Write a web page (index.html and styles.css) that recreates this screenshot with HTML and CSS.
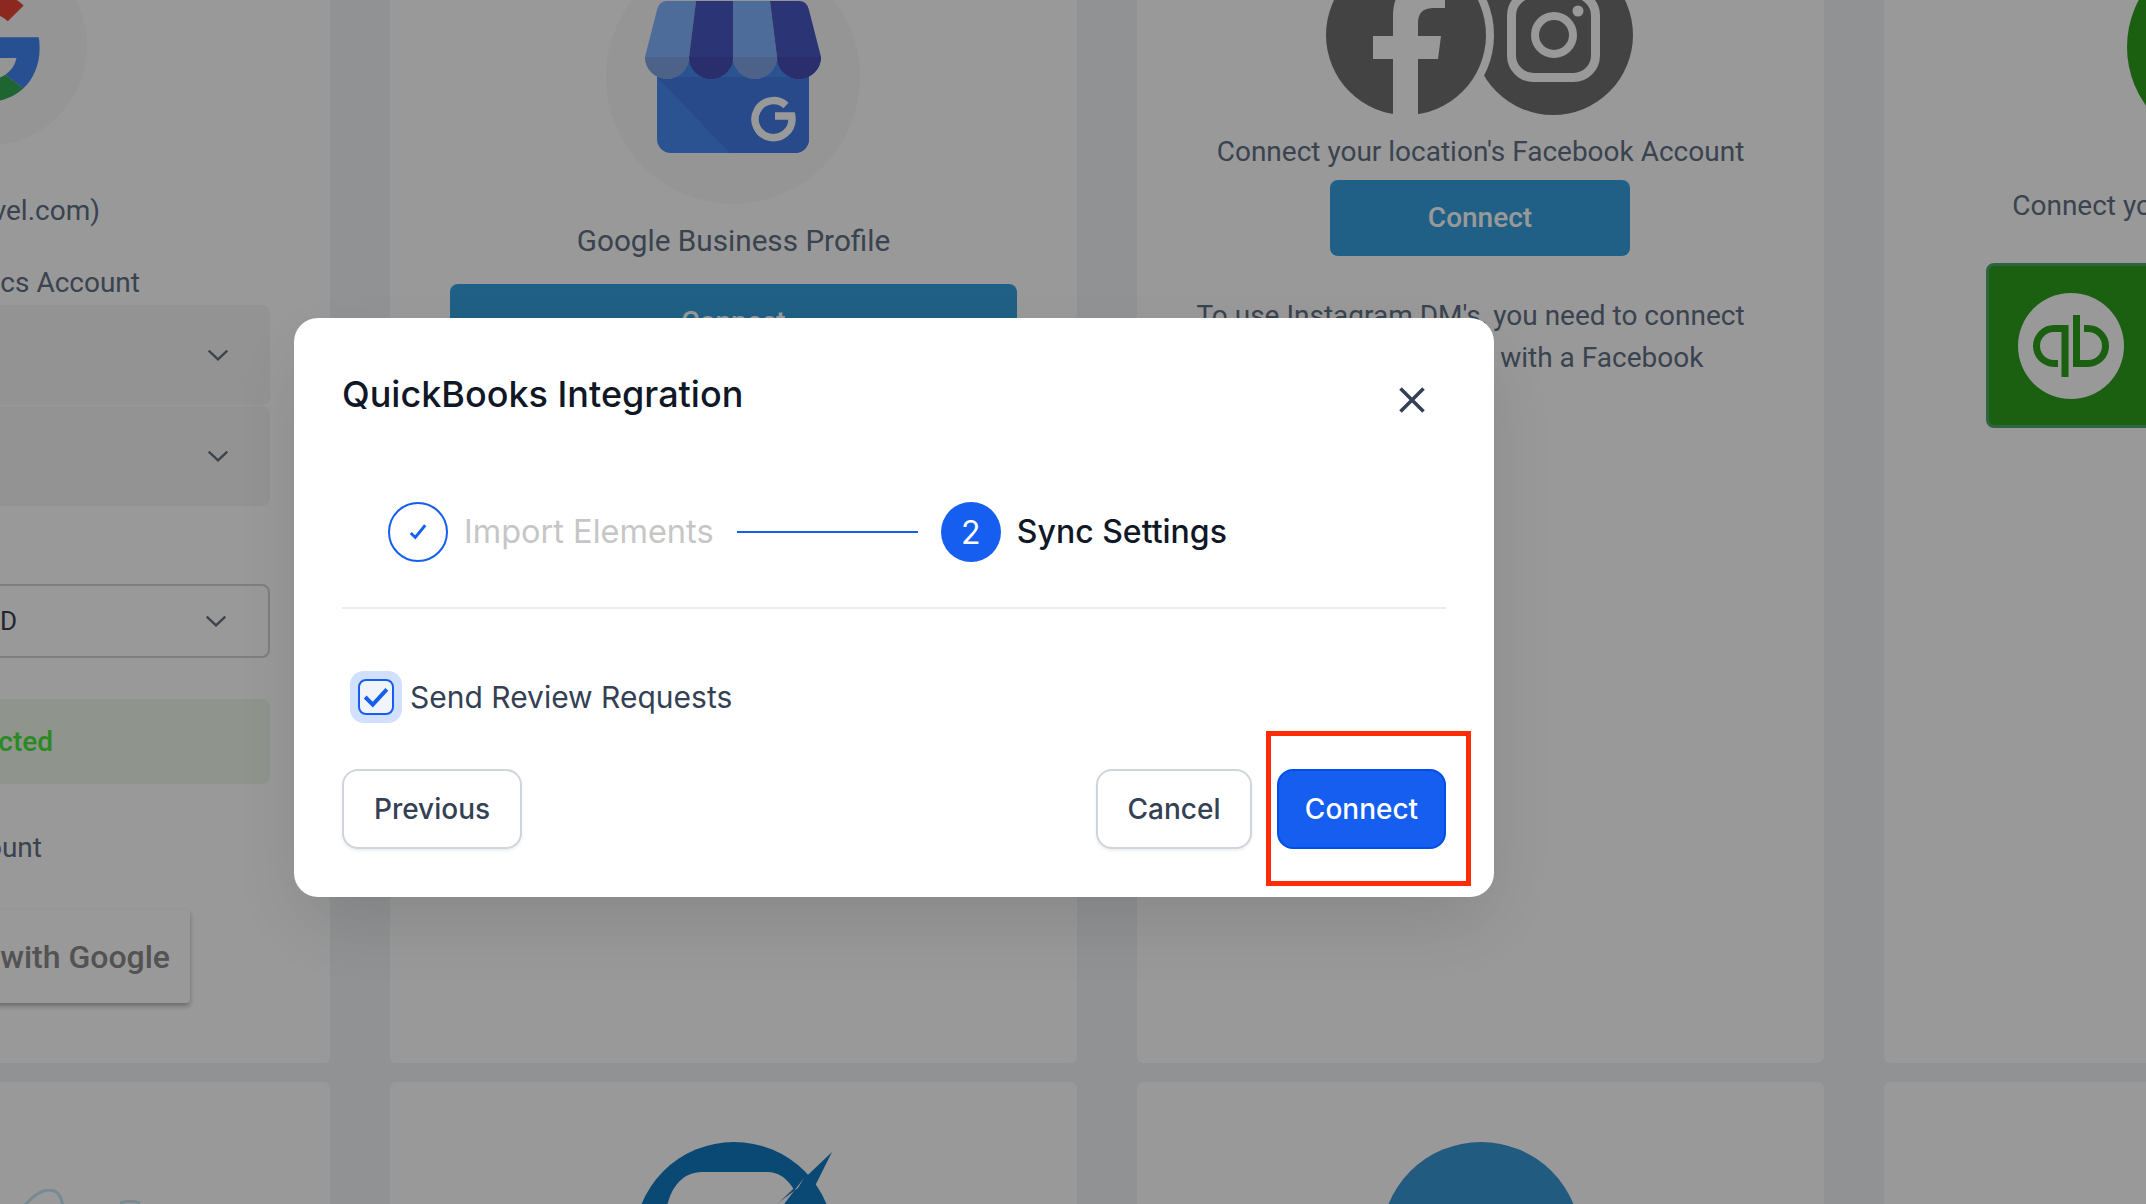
FILE: index.html
```html
<!DOCTYPE html>
<html lang="en">
<head>
<meta charset="utf-8">
<title>QuickBooks Integration</title>
<link rel="stylesheet" href="styles.css">
</head>
<body>
<div class="page">
  <section class="card card-google">
    <div class="logo-circle small">
      <svg class="g-logo" viewBox="0 0 48 48" width="111" height="111">
        <path fill="#EA4335" d="M24 9.5c3.54 0 6.71 1.22 9.21 3.6l6.85-6.85C35.9 2.38 30.47 0 24 0 14.62 0 6.51 5.38 2.56 13.22l7.98 6.19C12.43 13.72 17.74 9.5 24 9.5z"/>
        <path fill="#4285F4" d="M46.98 24.55c0-1.57-.15-3.09-.38-4.55H24v9.02h12.94c-.58 2.96-2.26 5.48-4.78 7.18l7.73 6c4.51-4.18 7.09-10.36 7.09-17.65z"/>
        <path fill="#FBBC05" d="M10.53 28.59c-.48-1.45-.76-2.99-.76-4.59s.27-3.14.76-4.59l-7.98-6.19C.92 16.46 0 20.12 0 24c0 3.88.92 7.54 2.56 10.78l7.97-6.19z"/>
        <path fill="#34A853" d="M24 48c6.48 0 11.93-2.13 15.89-5.81l-7.73-6c-2.15 1.45-4.92 2.3-8.16 2.3-6.26 0-11.57-4.22-13.47-9.91l-7.98 6.19C6.51 42.62 14.62 48 24 48z"/>
      </svg>
    </div>
    <p class="tail tail-email">vel.com)</p>
    <p class="tail tail-account">cs Account</p>
    <div class="select filled first">
      <svg class="chev" viewBox="0 0 20 11"><path d="M1.5 1.5 10 9.5l8.5-8"/></svg>
    </div>
    <div class="select filled">
      <svg class="chev" viewBox="0 0 20 11"><path d="M1.5 1.5 10 9.5l8.5-8"/></svg>
    </div>
    <div class="select bordered">
      <span class="select-value">D</span>
      <svg class="chev" viewBox="0 0 20 11"><path d="M1.5 1.5 10 9.5l8.5-8"/></svg>
    </div>
    <div class="status">cted</div>
    <p class="tail tail-count">ount</p>
    <div class="google-btn">with Google</div>
  </section>

  <section class="card card-gbp">
    <div class="logo-circle large">
      <svg viewBox="0 0 176 152" width="176" height="152">
        <path fill="#4889f2" d="M12 60h152v78a14 14 0 0 1-14 14H26a14 14 0 0 1-14-14z"/>
        <path fill="#447be6" d="M12 76h152v62a14 14 0 0 1-14 14H85z"/>
        <path fill="#83b5ff" d="M22 0h29l-7 56a22 22 0 0 1-44 0L12 9Q14 0 22 0z"/>
        <path fill="#4858c3" d="M51 0h37v56a22 22 0 0 1-44 0z"/>
        <path fill="#83b5ff" d="M88 0h37l7 56a22 22 0 0 1-44 0z"/>
        <path fill="#4858c3" d="M125 0h29q8 0 10 9l12 47a22 22 0 0 1-44 0z"/>
        <path fill="#80a3e4" d="M0 56h44a22 22 0 0 1-44 0zM88 56h44a22 22 0 0 1-44 0z"/>
        <path fill="#464eb4" d="M44 56h44a22 22 0 0 1-44 0zM132 56h44a22 22 0 0 1-44 0z"/>
        <path fill="none" stroke="#fff" stroke-width="7.5" d="M141 104.500a18.500 18.500 0 1 0 6 13.500c0-1-.1-2-.3-3H130"/>
      </svg>
    </div>
    <p class="label label-gbp">Google Business Profile</p>
    <div class="btn-blue wide">Connect</div>
  </section>

  <section class="card card-social">
    <svg class="social" viewBox="0 0 307 160" width="307" height="160">
      <circle cx="227" cy="80" r="80" fill="#717171"/>
      <circle cx="80" cy="80" r="88" fill="#fff"/>
      <circle cx="80" cy="80" r="80" fill="#717171"/>
      <path fill="#fff" d="M67 160V104H47V81h20V61c0-24 13-36 35-36 6 0 12 .5 17 1.500V53h-11c-11 0-16 5-16 15v13h23l-3 23H92v56z"/>
      <rect x="185.500" y="38.500" width="84" height="84" rx="22" fill="none" stroke="#fff" stroke-width="9"/>
      <circle cx="228" cy="80" r="19" fill="none" stroke="#fff" stroke-width="8"/>
      <circle cx="252" cy="56" r="5.500" fill="#fff"/>
    </svg>
    <p class="label label-fb">Connect your location's Facebook Account</p>
    <div class="btn-blue narrow">Connect</div>
    <p class="label label-ig">To use Instagram DM's, you need to connect<br>your Instagram page with a Facebook</p>
  </section>

  <section class="card card-qb">
    <div class="qb-circle"></div>
    <p class="label label-qb">Connect your QuickBooks Account</p>
    <div class="qb-btn">
      <svg viewBox="-53 -53 106 106" width="106" height="106">
        <circle cx="0" cy="0" r="53" fill="#fff"/>
        <path fill="none" stroke="#2ca01c" stroke-width="7" d="M-6 31V-17.500H-17A17.500 17.500 0 0 0 -17 17.500H-13"/>
        <path fill="none" stroke="#2ca01c" stroke-width="7" d="M5.500 -31V17.500H17A17.500 17.500 0 0 0 17 -17.500H13"/>
      </svg>
    </div>
  </section>

  <section class="card row-two">
    <svg class="squiggle" viewBox="0 0 150 40" width="150" height="40">
      <path fill="none" stroke="#c5e6f7" stroke-width="3" d="M4 17C13 7 22 1 29 1c9 0 12 6 14 16M100 14c6-2 14-2 20 0"/>
    </svg>
  </section>
  <section class="card row-two">
    <svg class="ring" viewBox="0 0 210 70" width="210" height="70">
      <circle cx="100" cy="100" r="100" fill="#127ac1"/>
      <path fill="#fff" d="M32 70c3-22 15-40 36-40h66c17 0 30 18 34 40z"/>
      <path fill="#127ac1" d="M198 10 172 62l-7 8h-30z"/>
      <path fill="#fff" d="M170 36l-6 10-32 24h12z"/>
    </svg>
  </section>
  <section class="card row-two">
    <div class="blue-circle"></div>
  </section>
  <section class="card row-two"></section>
</div>

<div class="overlay">
  <div class="modal" role="dialog">
    <header class="modal-head">
      <h2 class="modal-title">QuickBooks Integration</h2>
      <svg class="close" viewBox="0 0 28 28" width="28" height="28"><path d="M2.500 2.500l23 23M25.500 2.500l-23 23"/></svg>
    </header>
    <div class="stepper">
      <span class="step-dot done">
        <svg viewBox="0 0 20 20" width="18" height="18"><path d="M2 11l5 5L18 2.500"/></svg>
      </span>
      <span class="step-label muted">Import Elements</span>
      <span class="step-line"></span>
      <span class="step-dot current">2</span>
      <span class="step-label active">Sync Settings</span>
    </div>
    <label class="check-row">
      <span class="check-halo">
        <span class="check-box">
          <svg viewBox="0 0 24 20" width="26" height="22"><path d="M2 10l7 7L22 3"/></svg>
        </span>
      </span>
      <span class="check-text">Send Review Requests</span>
    </label>
    <footer class="modal-foot">
      <button class="btn btn-white btn-prev">Previous</button>
      <span class="grow"></span>
      <button class="btn btn-white btn-cancel">Cancel</button>
      <button class="btn btn-primary">Connect</button>
    </footer>
    <div class="highlight"></div>
  </div>
</div>
</body>
</html>
```

FILE: styles.css
```css
* { box-sizing: border-box; }
html, body { margin: 0; height: 1204px; overflow: hidden; }
p { margin: 0; white-space: nowrap; }
body { position: relative; background: #f0f3f6; font-family: "Inter", "Liberation Sans", sans-serif; }

.page {
  display: grid;
  grid-template-columns: repeat(4, 687px);
  grid-template-rows: 1177px 300px;
  column-gap: 60px;
  row-gap: 19px;
  margin: -114px 0 0 -357px;
  width: 2961px;
}
.card {
  background: #fff;
  border-radius: 6px;
  padding: 60px;
  display: flex;
  flex-direction: column;
  align-items: center;
  font-family: "Roboto", "Liberation Sans", sans-serif;
  font-size: 28px;
  line-height: 42px;
  color: #617084;
  overflow: hidden;
}

.logo-circle { border-radius: 50%; background: #f8f8f8; display: flex; align-items: center; justify-content: center; flex: none; }
.logo-circle.small { width: 200px; height: 200px; }
.logo-circle.large { width: 254px; height: 254px; margin-right: 2px; }
.card-gbp { padding-top: 64px; }

/* first card: everything left of the window edge is cut off */
.tail { align-self: flex-end; }
.tail-email { margin-top: 44px; margin-right: 170px; }
.tail-account { margin-top: 30px; margin-right: 130px; }
.tail-count { margin-top: 43px; margin-right: 228px; }
.select {
  align-self: stretch;
  display: flex;
  align-items: center;
  justify-content: flex-end;
  border-radius: 8px;
  padding-right: 41px;
  flex: none;
}
.select.filled { height: 100px; background: #f6f6f7; margin-top: 1px; }
.select.filled.first { margin-top: 1px; }
.select.bordered {
  height: 74px;
  margin-top: 78px;
  border: 2px solid #d2d2d2;
  justify-content: space-between;
  padding-left: 295px;
  padding-right: 41px;
  color: #39404c;
  font-size: 26px;
}
.chev { width: 22px; height: 12px; }
.chev path { fill: none; stroke: #66717f; stroke-width: 2.2; }
.status {
  align-self: stretch;
  height: 85px;
  margin-top: 41px;
  background: #eef7ec;
  border-radius: 8px;
  display: flex;
  align-items: center;
  justify-content: flex-end;
  padding-right: 217px;
  color: #45e638;
  font-weight: 500;
  flex: none;
}
.google-btn {
  align-self: flex-end;
  width: 400px;
  height: 93px;
  margin-top: 41px;
  margin-right: 80px;
  border-radius: 4px;
  background: #fff;
  box-shadow: 0 3px 5px rgba(0, 0, 0, .3);
  display: flex;
  align-items: center;
  justify-content: flex-end;
  padding-right: 20px;
  color: #8a8a8a;
  font-size: 32px;
  font-weight: 500;
  flex: none;
}

/* shared labels and buttons */
.label { text-align: center; }
.label-gbp { margin-top: 16px; font-size: 29.7px; }
.label-fb { margin-top: 16px; }
.label-ig { margin-top: 39px; margin-right: 20px; }
.label-qb { margin-top: 38px; }
.btn-blue {
  display: flex;
  align-items: center;
  justify-content: center;
  height: 76px;
  border-radius: 8px;
  background: #36a0df;
  color: #fff;
  font-weight: 500;
  flex: none;
}
.btn-blue.wide { width: 567px; margin-top: 22px; }
.btn-blue.narrow { width: 300px; margin-top: 7px; margin-right: 1px; }

.card-social { padding-top: 69px; }
.social { flex: none; margin-right: 2px; }

.qb-circle { width: 200px; height: 200px; border-radius: 50%; background: #2ca01c; flex: none; margin-right: 2px; }
.card-qb { padding-top: 61px; }
.qb-btn {
  width: 482px;
  height: 165px;
  margin-top: 36px;
  margin-right: 2px;
  padding-left: 29px;
  background: #2ca01c;
  border: 3px solid #4da76e;
  border-radius: 8px;
  display: flex;
  align-items: center;
  flex: none;
}

/* second row of cards */
.row-two { padding-top: 60px; }
.squiggle { align-self: flex-end; margin: 47px 100px 0 0; }
.ring { flex: none; align-self: center; margin-left: 10px; }
.blue-circle { width: 200px; height: 200px; border-radius: 50%; background: #3a98d5; flex: none; }

/* modal */
.overlay {
  position: absolute;
  inset: 0;
  background: rgba(0, 0, 0, .4);
  padding: 318px 0 0 294px;
}
.modal {
  position: relative;
  width: 1200px;
  height: 579px;
  padding: 48px;
  background: #fff;
  border-radius: 24px;
  box-shadow: 0 30px 70px -10px rgba(0, 0, 0, .12);
  color: #1f2937;
}
.modal-head { display: flex; justify-content: space-between; align-items: center; height: 60px; padding-right: 20px; }
.modal-title { margin: -4px 0 0; font-size: 36px; line-height: 60px; font-weight: 500; color: #101828; }
.close { margin-top: 8px; }
.close path { fill: none; stroke: #344054; stroke-width: 3.6; }

.stepper {
  display: flex;
  align-items: center;
  height: 60px;
  margin-top: 76px;
  padding: 0 0 45px 46px;
  border-bottom: 2px solid #eaecf0;
  box-sizing: content-box;
}
.step-dot {
  width: 60px;
  height: 60px;
  border-radius: 50%;
  display: flex;
  align-items: center;
  justify-content: center;
  flex: none;
}
.step-dot.done { border: 2px solid #155eef; }
.step-dot.done path { fill: none; stroke: #155eef; stroke-width: 3.2; }
.step-dot.current { background: #155eef; color: #fff; font-size: 32px; }
.step-label { font-size: 32px; line-height: 44px; margin-left: 16px; }
.step-label.muted { color: #c6c6c6; font-size: 32.5px; }
.step-label.active { color: #101828; font-weight: 500; }
.step-line { width: 181px; height: 2.500px; margin: 0 22.700px 0 23.600px; background: #155eef; flex: none; }

.check-row { display: flex; align-items: center; margin-top: 62px; padding-left: 8px; }
.check-halo {
  width: 52px;
  height: 52px;
  border-radius: 14px;
  background: #d1e0ff;
  display: flex;
  align-items: center;
  justify-content: center;
}
.check-box {
  width: 36px;
  height: 36px;
  border: 2.500px solid #155eef;
  border-radius: 8px;
  background: #f2f4fb;
  display: flex;
  align-items: center;
  justify-content: center;
}
.check-box path { fill: none; stroke: #155eef; stroke-width: 3.6; }
.check-text { margin-left: 8px; font-size: 30px; line-height: 44px; color: #344054; }

.modal-foot { display: flex; align-items: center; gap: 25px; margin-top: 46px; }
.grow { flex: 1; }
.btn {
  height: 80px;
  padding: 0;
  border-radius: 16px;
  font: 500 28px "Inter", "Liberation Sans", sans-serif;
}
.btn-white { background: #fff; border: 2.500px solid #d0d5dd; color: #344054; box-shadow: 0 2px 3px rgba(16, 24, 40, .07); }
.btn-prev { width: 180px; }
.btn-cancel { width: 156px; }
.btn-primary { width: 169px; background: #155eef; border: 2px solid #004eeb; color: #fff; }

.highlight {
  position: absolute;
  left: 972px;
  top: 413px;
  width: 205px;
  height: 155px;
  border: 5px solid #ff2a06;
}
```
